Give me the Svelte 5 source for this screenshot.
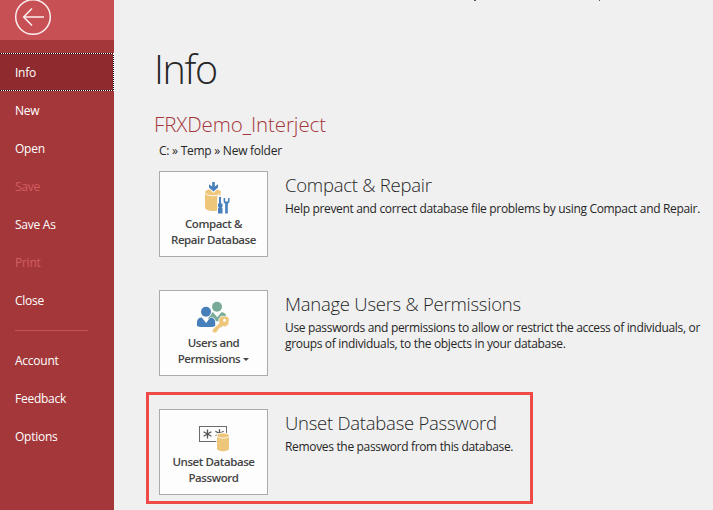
<script>
  const primary = [
    { label: 'Info', active: true },
    { label: 'New' },
    { label: 'Open' },
    { label: 'Save', disabled: true },
    { label: 'Save As' },
    { label: 'Print', disabled: true },
    { label: 'Close' }
  ];
  const secondary = [{ label: 'Account' }, { label: 'Feedback' }, { label: 'Options' }];
  const actions = [
    {
      icon: 'repair', button: ['Compact &', 'Repair Database'],
      title: 'Compact & Repair',
      lines: ['Help prevent and correct database file problems by using Compact and Repair.']
    },
    {
      icon: 'users', button: ['Users and', 'Permissions'], menu: true,
      title: 'Manage Users & Permissions',
      lines: [
        'Use passwords and permissions to allow or restrict the access of individuals, or',
        'groups of individuals, to the objects in your database.'
      ]
    },
    {
      icon: 'password', button: ['Unset Database', 'Password'], highlight: true,
      title: 'Unset Database Password',
      lines: ['Removes the password from this database.']
    }
  ];
</script>

{#snippet navItem(item)}
  <div class="item" class:active={item.active} class:disabled={item.disabled}><span>{item.label}</span></div>
{/snippet}

<div class="window">
  <nav>
    <div class="top">
      <svg width="38" height="38" viewBox="0 0 38 38" fill="none" stroke="#fbeeee">
        <circle cx="19" cy="19" r="17.3" stroke-width="1.5" />
        <path d="M30 19H10M18 10.5L9.7 19L18 27.5" stroke-width="1.6" />
      </svg>
    </div>
    <div class="items">
      {#each primary as item}{@render navItem(item)}{/each}
      <div class="divider"></div>
      {#each secondary as item}{@render navItem(item)}{/each}
    </div>
  </nav>

  <main>
    <i class="speck first"></i>
    <i class="speck second"></i>
    <h1><span>Info</span></h1>
    <h2><span>FRXDemo_Interject</span></h2>
    <div class="path"><span>C: » Temp » New folder</span></div>

    {#each actions as action}
      <section>
        {#if action.highlight}<div class="highlight"></div>{/if}
        <button>
          <svg width="37" height="35" viewBox="0 0 37 35">
            {#if action.icon === 'repair'}
              <path d="M10 11v15.5c0 2.3 3.8 3.5 8 3.5s8-1.2 8-3.5V11z" fill="#edc67a" />
              <ellipse cx="18" cy="11" rx="8" ry="3" fill="#edc67a" />
              <path d="M10 11.5c0 2 3.5 3.2 8 3.2s8-1.2 8-3.2" fill="none" stroke="#fdfdfd" />
              <path d="M16.3 0h4.4v6h3.8L18.5 12l-6-6h3.8z" fill="#fdfdfd" />
              <path d="M17.2 1h2.6v4.4L23 3.3v3.2L18.5 10.5 14 6.5V3.3l3.2 2.1z" fill="#467fb9" />
              <path d="M22.3 14.5h4.5v7h1.7v12.3h-6.5z" fill="#fdfdfd" />
              <path d="M24 16h2v6.5h1.5v3l-.8 1 .8 1V32.6h-4.5v-5.1l.8-1-.8-1v-3h1z" fill="#467fb9" />
              <path d="M28.6 17v4l1.6 2v9.6h2.6V23l1.7-2v-4h-1.5v3.5h-2.8V17z" fill="#467fb9" />
            {:else if action.icon === 'users'}
              <g transform="translate(.5 1.2)">
                <circle cx="21.5" cy="5.5" r="5" fill="#78aa97" />
                <path d="M13 18v-2.5c0-3 2-4.5 4.5-4.5l4.2 5 4.2-5c2.8 0 4.9 1.7 4.9 4.5V20H13z" fill="#78aa97" />
                <circle cx="10.5" cy="10.5" r="6" fill="#fdfdfd" />
                <circle cx="10.5" cy="10.5" r="5" fill="#467fb9" />
                <path d="M.5 26.5v-5c0-3.8 2.3-5.8 5.6-5.8l4.4 6 4.5-6c3.2 0 5.5 2 5.5 5.8v5z" fill="#fdfdfd" />
                <path d="M1.5 24.3v-3c0-3.2 2-5 4.8-5l4.3 5.5 4.3-5.5c2.8 0 4.8 1.8 4.8 5v3c0 1.2-3 1.6-9.1 1.6s-9.1-.4-9.1-1.6z" fill="#467fb9" />
                <path d="M25.5 15l6 .2 2.2 2.2-.4 5.5-3 2.6-3.5-.3-1.3 1.4-1.3.1-.1 1.4-1.5.2-.2 1.5-2 1.8H17v-3.3l6.7-6.2-.5-4z" fill="#edc67a" stroke="#fdfdfd" stroke-width=".7" />
                <circle cx="29" cy="19" r="1.5" fill="#fdfdfd" />
              </g>
            {:else}
              <g transform="translate(0 2.5)">
                <rect x="4.5" y="5" width="27" height="15" fill="#fdfdfd" stroke="#6b6b6b" />
                <path d="M12.5 8v9M8.6 10.3l7.8 4.5M16.4 10.3l-7.8 4.5M24.5 7.7v7M20.4 9.8l8 4.5M28.6 9.8l-8 4.5" stroke="#555" stroke-width="1.3" />
                <path d="M21.3 14c0-4 13.4-4 13.4 0v13.5c0 4-13.4 4-13.4 0z" fill="#fdfdfd" />
                <path d="M22 14.5v12.7c0 3.3 12 3.3 12 0V14.5c0-3.3-12-3.3-12 0z" fill="#edc67a" />
                <path d="M22 14.7c1.5 2.6 10.5 2.6 12 0" fill="none" stroke="#fdfdfd" stroke-width=".9" />
              </g>
            {/if}
          </svg>
          {#each action.button as line, i}
            <span class="row"><span>{line}</span>{#if action.menu && i === 1}<i class="caret"></i>{/if}</span>
          {/each}
        </button>
        <div class="text">
          <h3>{action.title}</h3>
          {#each action.lines as line}<p>{line}</p>{/each}
        </div>
      </section>
    {/each}
  </main>
</div>

<style>
  :global(body) { margin: 0; overflow: hidden; }
  .window {
    display: flex; width: 713px; height: 510px; overflow: hidden;
    background: #f0f0f0; color: #262626;
    font: 12px/16px "Open Sans", "Noto Sans", sans-serif;
    white-space: nowrap;
  }
  nav { width: 114px; flex: none; background: #a4373a; color: #fff; }
  .top { height: 40px; background: #c75054; overflow: hidden; }
  .top svg { display: block; margin: -2px 0 0 14px; }
  .items { padding-top: 13px; }
  .item {
    box-sizing: border-box; height: 38px; padding: 2px 0 0 15px;
    display: flex; align-items: center; letter-spacing: -.25px;
  }
  .active { position: relative; background: #8f2a2e; }
  .active::after {
    content: ""; position: absolute; inset: 0 0 0 -1px;
    border: 1px dotted #fff;
  }
  .active::before {
    content: ""; position: absolute; inset: 0 0 0 -1px; border: 1px solid #000;
  }
  .disabled { color: #d35e62; }
  .divider { height: 1px; width: 73px; margin: 11px 0 10px 15px; background: #c75054; }

  main { position: relative; flex: 1; padding: 41px 0 0 40px; }
  .speck { position: absolute; top: 0; height: 1px; background: #555; }
  .first { left: 360px; width: 2px; }
  .second { left: 485px; width: 1px; }
  h1, h2, h3, p { margin: 0; font-weight: 350; }
  h1 { font-size: 39.5px; line-height: 56px; letter-spacing: -1.4px; font-weight: 300; }
  h2 { margin-top: 13px; font-size: 20.5px; line-height: 28px; color: #a4373a; letter-spacing: -.1px; }
  .path { margin: 5px 0 12px 5px; letter-spacing: -.25px; }
  section { position: relative; display: flex; height: 86px; margin: 0 0 33px 5px; }
  .highlight {
    position: absolute; left: -13px; top: -17px; width: 381px; height: 106px;
    border: 3px solid #ed4a48;
  }
  button {
    box-sizing: border-box; width: 109px; height: 86px; flex: none;
    padding: 9px 0 0; border: 1px solid #ababab; background: #fdfdfd;
    display: flex; flex-direction: column; align-items: center;
    font: 600 11.5px/16px "Open Sans", "Noto Sans", sans-serif; color: #444;
    letter-spacing: -.42px;
  }
  button svg { display: block; flex: none; }
  .row { display: flex; align-items: center; height: 16px; }
  .caret { margin-left: 3px; border: 3px solid transparent; border-top-color: #444; border-bottom: 0; }
  .text { margin-left: 17px; }
  h3 { font-size: 18.5px; line-height: 28px; letter-spacing: -.25px; }
  p { font-weight: 400; letter-spacing: -.33px; }
  h3 + p { margin-top: 2px; }
</style>
